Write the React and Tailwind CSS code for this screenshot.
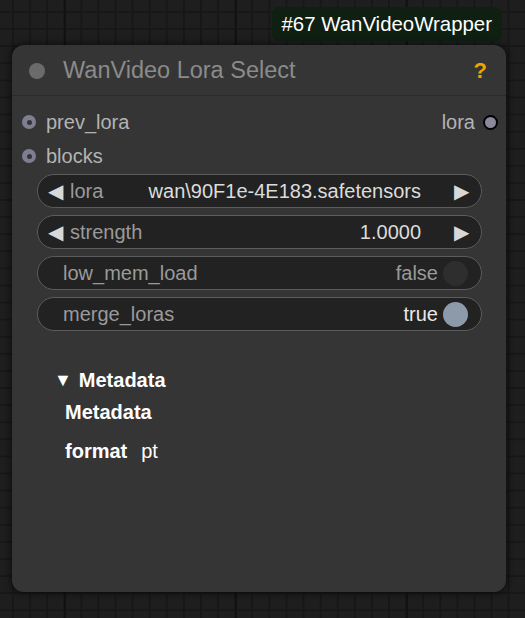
const font = { fontFamily: '"Liberation Sans", Arial, sans-serif' }

function SlotIn({ label }) {
  return (
    <div className="flex items-center h-[34px] pl-[10px]">
      <span className="flex items-center justify-center w-[14px] h-[14px] rounded-full bg-[#7e7e93]">
        <span className="w-[5px] h-[5px] rounded-full bg-[#353535]" />
      </span>
      <span className="ml-[10px] text-[20px] text-[#b3b3b3]">{label}</span>
    </div>
  )
}

function ComboWidget({ label, value }) {
  return (
    <div className="flex items-center h-[34px] rounded-full bg-[#222222] border border-[#5c5c5c] pl-[10px] pr-[12px]">
      <span className="text-[20px] text-[#d8d8d8] leading-none">◀</span>
      <span className="ml-[7px] text-[20px] text-[#9a9a9a]">{label}</span>
      <span className="ml-auto text-[20px] text-[#dcdcdc]">{value}</span>
      <span className="ml-[33px] text-[20px] text-[#d8d8d8] leading-none">▶</span>
    </div>
  )
}

function ToggleWidget({ label, on }) {
  return (
    <div className="flex items-center h-[34px] rounded-full bg-[#222222] border border-[#5c5c5c] pl-[25px] pr-[13px]">
      <span className="text-[20px] text-[#9a9a9a]">{label}</span>
      <span className={`ml-auto text-[20px] ${on ? 'text-[#e8e8e8]' : 'text-[#9a9a9a]'}`}>{on ? 'true' : 'false'}</span>
      <span className={`ml-[5px] w-[25px] h-[25px] rounded-full ${on ? 'bg-[#8c9aaa]' : 'bg-[#2e2e2e]'}`} />
    </div>
  )
}

export default function App() {
  return (
    <div
      style={font}
      className="w-[525px] h-[618px] overflow-hidden bg-[#1e1e1e] bg-[linear-gradient(to_right,#121212_2px,transparent_2px),linear-gradient(to_right,#171717_2px,transparent_2px),linear-gradient(to_bottom,#171717_2px,transparent_2px)] bg-size-[171px_171px,17.1px_17.1px,17.1px_17.1px] bg-position-[64px_0,12px_11px,12px_11px] flex flex-col"
    >
      {/* node id badge */}
      <div className="flex justify-end pr-[23px] pt-[7px]">
        <div className="h-[34px] px-[10px] flex items-center rounded-[7px] bg-[#0f1f12] text-white text-[20.4px]">
          #67 WanVideoWrapper
        </div>
      </div>

      {/* node */}
      <div className="mt-[4px] ml-[12px] w-[494px] h-[547px] rounded-[12px] bg-[#353535] shadow-[0_0_6px_2px_rgba(0,0,0,0.45)] flex flex-col">
        <div className="h-[51px] flex items-center pl-[17px] pr-[19px] pt-[1px] border-b border-[#2a2a2a]">
          <span className="w-[16px] h-[16px] rounded-full bg-[#6b6b6b]" />
          <span className="ml-[18px] text-[23.5px] text-[#8b8b8b]">WanVideo Lora Select</span>
          <span className="ml-auto text-[22px] font-bold text-[#f2a300]">?</span>
        </div>

        <div className="flex flex-col pt-[9px]">
          <div className="flex items-center justify-between pr-[8px]">
            <SlotIn label="prev_lora" />
            <div className="flex items-center">
              <span className="text-[20px] text-[#b3b3b3]">lora</span>
              <span className="ml-[8px] w-[15px] h-[15px] rounded-full bg-[#8a8a9c] border-2 border-black" />
            </div>
          </div>
          <SlotIn label="blocks" />
        </div>

        <div className="flex flex-col gap-[7px] mt-[1px] ml-[25px] mr-[24px]">
          <ComboWidget label="lora" value="wan\90F1e-4E183.safetensors" />
          <ComboWidget label="strength" value="1.0000" />
          <ToggleWidget label="low_mem_load" on={false} />
          <ToggleWidget label="merge_loras" on={true} />
        </div>

        <div className="flex flex-col mt-[34px] pl-[42px] text-white text-[20px]">
          <div className="flex items-center h-[30px] font-bold">
            <span className="text-[18px]">▼</span>
            <span className="ml-[7px]">Metadata</span>
          </div>
          <div className="pl-[11px] mt-[2px] h-[30px] flex items-center font-bold">Metadata</div>
          <div className="pl-[11px] mt-[9px] h-[30px] flex items-center">
            <span className="font-bold">format</span>
            <span className="ml-[14px]">pt</span>
          </div>
        </div>
      </div>
    </div>
  )
}
